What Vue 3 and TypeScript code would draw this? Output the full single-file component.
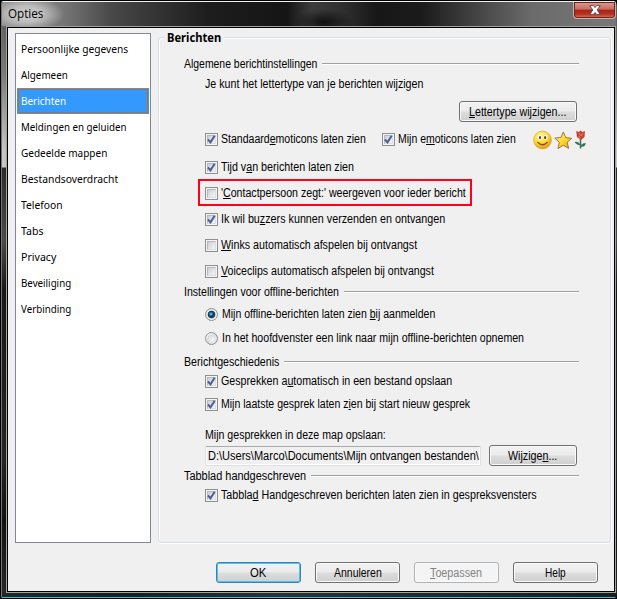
<script setup lang="ts">
import type { Directive } from 'vue'
import { h } from 'vue'

interface Entry { text: string; width: number }
interface Option extends Entry { checked: boolean; marked?: boolean }

const pages: Entry[] = [
  { text: 'Persoonlijke gegevens', width: 107 },
  { text: 'Algemeen', width: 47 },
  { text: 'Berichten', width: 45 },
  { text: 'Meldingen en geluiden', width: 106 },
  { text: 'Gedeelde mappen', width: 86 },
  { text: 'Bestandsoverdracht', width: 97 },
  { text: 'Telefoon', width: 42 },
  { text: 'Tabs', width: 23 },
  { text: 'Privacy', width: 35 },
  { text: 'Beveiliging', width: 50 },
  { text: 'Verbinding', width: 50 },
]

const messageOptions: Option[] = [
  { text: 'Tijd v&an berichten laten zien', width: 133, checked: true },
  { text: "'&Contactpersoon zegt:' weergeven voor ieder bericht", width: 245, checked: false, marked: true },
  { text: 'Ik wil bu&zzers kunnen verzenden en ontvangen', width: 224, checked: true },
  { text: '&Winks automatisch afspelen bij ontvangst', width: 196, checked: false },
  { text: '&Voiceclips automatisch afspelen bij ontvangst', width: 213, checked: false },
]

const offlineOptions: Option[] = [
  { text: 'Mijn offline-berichten laten zien &bij aanmelden', width: 213, checked: true },
  { text: 'In het hoofdvenster een link naar mijn offline-berichten opnemen', width: 302, checked: false },
]

const historyOptions: Option[] = [
  { text: 'Gesprekken a&utomatisch in een bestand opslaan', width: 231, checked: true },
  { text: 'Mijn laatste gesprek laten z&ien bij start nieuw gesprek', width: 249, checked: true },
]

// Condenses a label horizontally so that it fills its given width.
const vFit: Directive<HTMLElement, number> = {
  mounted(el, { value }) {
    const natural = el.offsetWidth
    el.style.transform = `scaleX(${value / natural})`
    el.style.marginRight = `${value - natural}px`
  },
}

// The letter after "&" is the access key and is underlined.
const Mnemonic = (props: { text: string }) => {
  const at = props.text.indexOf('&')
  if (at < 0) return h('span', props.text)
  return h('span', [props.text.slice(0, at), h('u', props.text[at + 1]), props.text.slice(at + 2)])
}
Mnemonic.props = ['text']
</script>

<template>
  <div class="window">
    <header class="titlebar">
      <span v-fit="35" class="fit caption">Opties</span>
      <button class="close" aria-label="Sluiten">
        <svg width="12" height="10" viewBox="0 0 12 10">
          <path d="M.8.600h3.700L6 2.500 7.500.600h3.700L8.200 5l3 4.400H7.500L6 7.500 4.500 9.400H.8L3.800 5z" fill="#fff" stroke="#4c4654" stroke-width=".9" />
        </svg>
      </button>
    </header>
    <main class="client">
      <div class="body">
        <nav class="pages">
          <div v-for="(p, i) in pages" :key="p.text" class="page" :class="{ selected: i === 2 }">
            <span v-fit="p.width" class="fit">{{ p.text }}</span>
          </div>
        </nav>
        <section class="panel">
          <h1><span v-fit="54" class="fit">Berichten</span></h1>
          <div class="group first"><span v-fit="133" class="fit">Algemene berichtinstellingen</span><i></i></div>
          <div class="row intro"><span v-fit="218" class="fit">Je kunt het lettertype van je berichten wijzigen</span></div>
          <div class="row font-row">
            <button class="btn font-btn"><span v-fit="97" class="fit"><Mnemonic text="&Lettertype wijzigen..." /></span></button>
          </div>
          <div class="row emoticons">
            <label class="option standard"><span class="check on"><svg viewBox="0 0 9 9"><path d="M1 4.500 3.500 7.300 7.700.8" /></svg></span><span v-fit="145" class="fit"><Mnemonic text="Standaard&emoticons laten zien" /></span></label>
            <label class="option own"><span class="check on"><svg viewBox="0 0 9 9"><path d="M1 4.500 3.500 7.300 7.700.8" /></svg></span><span v-fit="118" class="fit"><Mnemonic text="Mijn e&moticons laten zien" /></span></label>
            <svg class="faces" width="55" height="20" viewBox="0 0 55 20">
              <defs>
                <radialGradient id="smile" cx=".4" cy=".3" r=".75"><stop offset="0" stop-color="#fff79a" /><stop offset=".55" stop-color="#ffd92e" /><stop offset="1" stop-color="#dd8d08" /></radialGradient>
                <linearGradient id="star" x2="1" y2="1"><stop offset="0" stop-color="#fff6a0" /><stop offset=".5" stop-color="#ffda32" /><stop offset="1" stop-color="#e89b16" /></linearGradient>
              </defs>
              <circle cx="9.500" cy="10" r="8.900" fill="url(#smile)" stroke="#d9a337" stroke-width=".7" />
              <ellipse cx="6.700" cy="7.300" rx="2" ry="2.600" fill="#fff" /><ellipse cx="12.400" cy="7.300" rx="2" ry="2.600" fill="#fff" />
              <ellipse cx="7" cy="7.600" rx="1" ry="1.600" fill="#583018" /><ellipse cx="12.100" cy="7.600" rx="1" ry="1.600" fill="#583018" />
              <path d="M4.500 12q5 5.500 10 0" fill="none" stroke="#8b4c12" stroke-width="1.300" />
              <path d="m30.300 2 2.400 5.600 6 .7-4.500 4 1.400 6.100-5.300-3.200-5.400 3.300 1.500-6.200-4.600-4.200 6.100-.6z" fill="url(#star)" stroke="#9b6a24" stroke-width=".9" />
              <path d="M47.500 9v9.500" stroke="#3d7050" stroke-width="1.500" />
              <path d="M47 15q-4-.5-5-3 4-.5 5 3zM48 16.500q.5-3.500 4.500-3-.5 3.500-4.500 3z" fill="#2e7655" stroke="#2e7655" stroke-width=".6" />
              <path d="m43.200 1 2.500 1 2-1.500L49.500 2l2.500-1-.5 6-3.600 3-4-3z" fill="#c94532" />
              <path d="m46 3 2 3 2-3M45.500 6l2 2" fill="none" stroke="#ed8268" stroke-width=".9" />
            </svg>
          </div>
          <label v-for="o in messageOptions" :key="o.text" class="row option message" :class="{ marked: o.marked }">
            <span class="check" :class="{ on: o.checked }"><svg v-if="o.checked" viewBox="0 0 9 9"><path d="M1 4.500 3.500 7.300 7.700.8" /></svg></span>
            <span v-fit="o.width" class="fit"><Mnemonic :text="o.text" /></span>
          </label>
          <div class="group"><span v-fit="155" class="fit">Instellingen voor offline-berichten</span><i></i></div>
          <div class="radios">
            <label v-for="o in offlineOptions" :key="o.text" class="row option offline">
              <span class="radio" :class="{ on: o.checked }"></span>
              <span v-fit="o.width" class="fit"><Mnemonic :text="o.text" /></span>
            </label>
          </div>
          <div class="group history-group"><span v-fit="95" class="fit">Berichtgeschiedenis</span><i></i></div>
          <label v-for="o in historyOptions" :key="o.text" class="row option history">
            <span class="check on"><svg viewBox="0 0 9 9"><path d="M1 4.500 3.500 7.300 7.700.8" /></svg></span>
            <span v-fit="o.width" class="fit"><Mnemonic :text="o.text" /></span>
          </label>
          <div class="row folder-label"><span v-fit="181" class="fit">Mijn gesprekken in deze map opslaan:</span></div>
          <div class="row folder">
            <div class="path"><span v-fit="271" class="fit">D:\Users\Marco\Documents\Mijn ontvangen bestanden\</span></div>
            <button class="btn change"><span v-fit="49" class="fit"><Mnemonic text="Wijzige&n..." /></span></button>
          </div>
          <div class="group tab-group"><span v-fit="122" class="fit">Tabblad handgeschreven</span><i></i></div>
          <label class="row option handwriting">
            <span class="check on"><svg viewBox="0 0 9 9"><path d="M1 4.500 3.500 7.300 7.700.8" /></svg></span>
            <span v-fit="316" class="fit"><Mnemonic text="Tabbla&d Handgeschreven berichten laten zien in gespreksvensters" /></span>
          </label>
        </section>
      </div>
      <footer class="actions">
        <button class="btn default"><span v-fit="16" class="fit">OK</span></button>
        <button class="btn"><span v-fit="48" class="fit">Annuleren</span></button>
        <button class="btn disabled" disabled><span v-fit="52" class="fit"><Mnemonic text="&Toepassen" /></span></button>
        <button class="btn"><span v-fit="21" class="fit">Help</span></button>
      </footer>
    </main>
  </div>
</template>

<style>
body { margin: 0; background: #000; overflow: hidden; }
</style>

<style scoped>
.window {
  box-sizing: border-box; width: 617px; height: 599px; padding: 2px 1px 1px 2px;
  display: flex; flex-direction: column; align-items: flex-start;
  font: 12px/16px "Liberation Sans", Arial, sans-serif; color: #000;
  border-radius: 6px 6px 5px 5px;
  background:
    linear-gradient(#000, #000) 0 0 / 100% 1px no-repeat,
    linear-gradient(#f2f2f2, #f2f2f2) 0 1px / 100% 1px no-repeat,
    linear-gradient(#3cc3df, #3cc3df) 0 597px / 100% 1px no-repeat,
    linear-gradient(#000, #000) 0 598px / 100% 1px no-repeat,
    linear-gradient(90deg, #000 0 1px, #777 1px 2px, transparent 2px) 0 2px / 100% 595px no-repeat,
    linear-gradient(90deg, #262626, #1c1c1c 20%, #303030 45%, #1c1c1c) 0 593px / 100% 4px no-repeat,
    linear-gradient(#555, #777 70px, #c4c4c4 150px, #c7c7c7 167px, #2b2b2b 168px, #4a4a4a 240px, #181818 290px, #242424 460px, #111 520px, #292929) 0 0 / 100% 100% no-repeat;
}
.fit { display: inline-block; white-space: nowrap; transform-origin: 0 50%; flex: none; }
.titlebar {
  width: 614px; height: 24px; display: flex; justify-content: space-between;
  background:
    radial-gradient(ellipse 38px 18px at 24px 12px, #cfcfcf 0, #bdbdbd 45%, transparent 100%),
    radial-gradient(ellipse 30px 13px at 322px 20px, #111 0, transparent 100%),
    linear-gradient(90deg, #858585 0, #777 60px, #484848 110px, #1d1d1d 205px, #151515 285px, #3d3d3d 310px, #303030 340px, #171717 375px, #1b1b1b 420px, #444 475px, #6b6b6b 530px, #777 100%);
}
.caption { margin-left: 6px; font: 12px/23px "Open Sans", "Noto Sans", sans-serif; }
.close {
  box-sizing: border-box; width: 43px; height: 17px; padding: 0; display: flex; align-items: center; justify-content: center;
  border: 1px solid #ccb1ae; border-top: 0; border-radius: 0 0 4px 4px;
  background: linear-gradient(#df9a90 0, #c86e62 45%, #a82416 50%, #b6301f 75%, #e07857 100%);
  box-shadow: inset 0 0 0 1px #6b241e;
}
.client {
  box-sizing: border-box; width: 608px; height: 565px; margin: 1px 0 0 5px; border: 1px solid #000; background: #f0f0f0;
  outline: 1px solid #a2a2a2;
}
.body { display: flex; padding: 5px 0 0 7px; }
.pages { box-sizing: border-box; width: 136px; height: 510px; border: 1px solid #828790; background: #fff; padding: 2px 1px; font: 11.500px/26px "Noto Sans", "Open Sans", sans-serif; }
.page { box-sizing: border-box; height: 26px; padding-left: 4px; white-space: nowrap; line-height: 26px; }
.page.selected { background: #3399ff; border: 1px solid #3399ff; box-shadow: inset 0 0 0 1px #c66a19; color: #fff; padding-left: 3px; line-height: 24px; }
.panel {
  box-sizing: border-box; width: 453px; height: 506px; margin: 4px 0 0 7px; padding: 0 0 0 25px;
  border: 1px solid #d5dfe5; border-radius: 3px; box-shadow: inset 1px 1px #fff, 0 1px #fff, 1px 0 #fff;
}
h1 { margin: -8px 0 0 -20px; padding: 0 3px; height: 16px; width: 54px; font: bold 12px/16px "Noto Sans", sans-serif; background: #f0f0f0; }
.group { width: 395px; height: 16px; display: flex; align-items: center; gap: 5px; }
.group i { flex: 1; height: 1px; background: #a0a0a0; border-bottom: 1px solid #fff; }
.group.first { margin-top: 10px; }
.row { width: 395px; display: flex; align-items: center; }
.intro { height: 22px; margin-top: 1px; padding-left: 21px; }
.font-row { height: 33px; justify-content: flex-end; }
.emoticons { height: 22px; margin-bottom: 4px; padding-left: 21px; width: 390px; }
.option { display: flex; align-items: center; gap: 3px; }
.standard { width: 177px; }
.own { width: 151px; }
.faces { flex: none; margin-top: 2px; }
.check { box-sizing: border-box; flex: none; width: 13px; height: 13px; border: 1px solid #8e8f8f; padding: 1px; background: #f4f4f4; display: flex; margin-top: 1px; }
.check::before { content: ""; box-sizing: border-box; flex: none; width: 9px; height: 9px; border: 1px solid #b5b9be; border-right-color: #dcdfe2; border-bottom-color: #dcdfe2; background: linear-gradient(135deg, #cbcfd5, #f6f6f6); }
.check svg { flex: none; width: 9px; height: 9px; margin-left: -9px; overflow: visible; }
.check path { fill: none; stroke: #4a5f97; stroke-width: 2; }
.message { height: 26px; padding-left: 21px; box-sizing: border-box; }
.marked { border: 2px solid #ff001d; width: 274px; height: 27px; margin: -1px 0 0 14px; padding-left: 5px; }
.radios { padding: 2px 0 4px; }
.offline { height: 24px; padding-left: 21px; gap: 4px; }
.radio { box-sizing: border-box; flex: none; width: 13px; height: 13px; margin-top: 1px; border: 1px solid #8e8f8f; border-radius: 50%; background: radial-gradient(circle at 60% 60%, #f5f5f5 0, #d7dadd 55%, #f4f4f4 65%); }
.radio.on { background: radial-gradient(circle at 5px 5px, #8edcf2 0, #248bb4 1.200px, transparent 2.400px), radial-gradient(circle at 50% 50%, #16405f 0 3px, #1c3348 3.400px, #e9ebed 4.200px); }
.history-group { margin-bottom: -1px; }
.history { height: 23px; padding-left: 21px; }
.folder-label { height: 20px; margin-top: 10px; padding-left: 21px; }
.folder { width: 372px; padding-left: 21px; height: 21px; justify-content: space-between; }
.path { box-sizing: border-box; width: 276px; height: 20px; padding-left: 2px; border: 1px solid #dde0e4; border-top-color: #aaabb1; border-radius: 2px; line-height: 18px; overflow: hidden; box-shadow: inset 1px 0 #fff, inset -1px 0 #fff, inset 0 -1px #fff; }
.tab-group { margin-top: 2px; }
.handwriting { height: 22px; padding-left: 21px; }
.btn {
  box-sizing: border-box; flex: none; width: 85px; height: 21px; padding: 0; border: 1px solid #707070; border-radius: 3px;
  display: flex; align-items: center; justify-content: center; font: inherit; color: #000;
  background: linear-gradient(#f2f2f2 0, #ebebeb 48%, #dddddd 52%, #cfcfcf 100%); box-shadow: inset 0 0 0 1px #fafafa;
}
.font-row .font-btn { width: 118px; margin-right: 2px; }
.change { width: 88px; }
.default { border-color: #3c7fb1; box-shadow: inset 0 0 0 1px #48c8f0; }
.disabled { border-color: #adb2b5; background: #f4f4f4; color: #838383; }
.actions { display: flex; gap: 14px; padding: 19px 0 0 208px; }
u { text-decoration: none; border-bottom: 1px solid currentColor; display: inline-block; line-height: 11px; }
</style>
